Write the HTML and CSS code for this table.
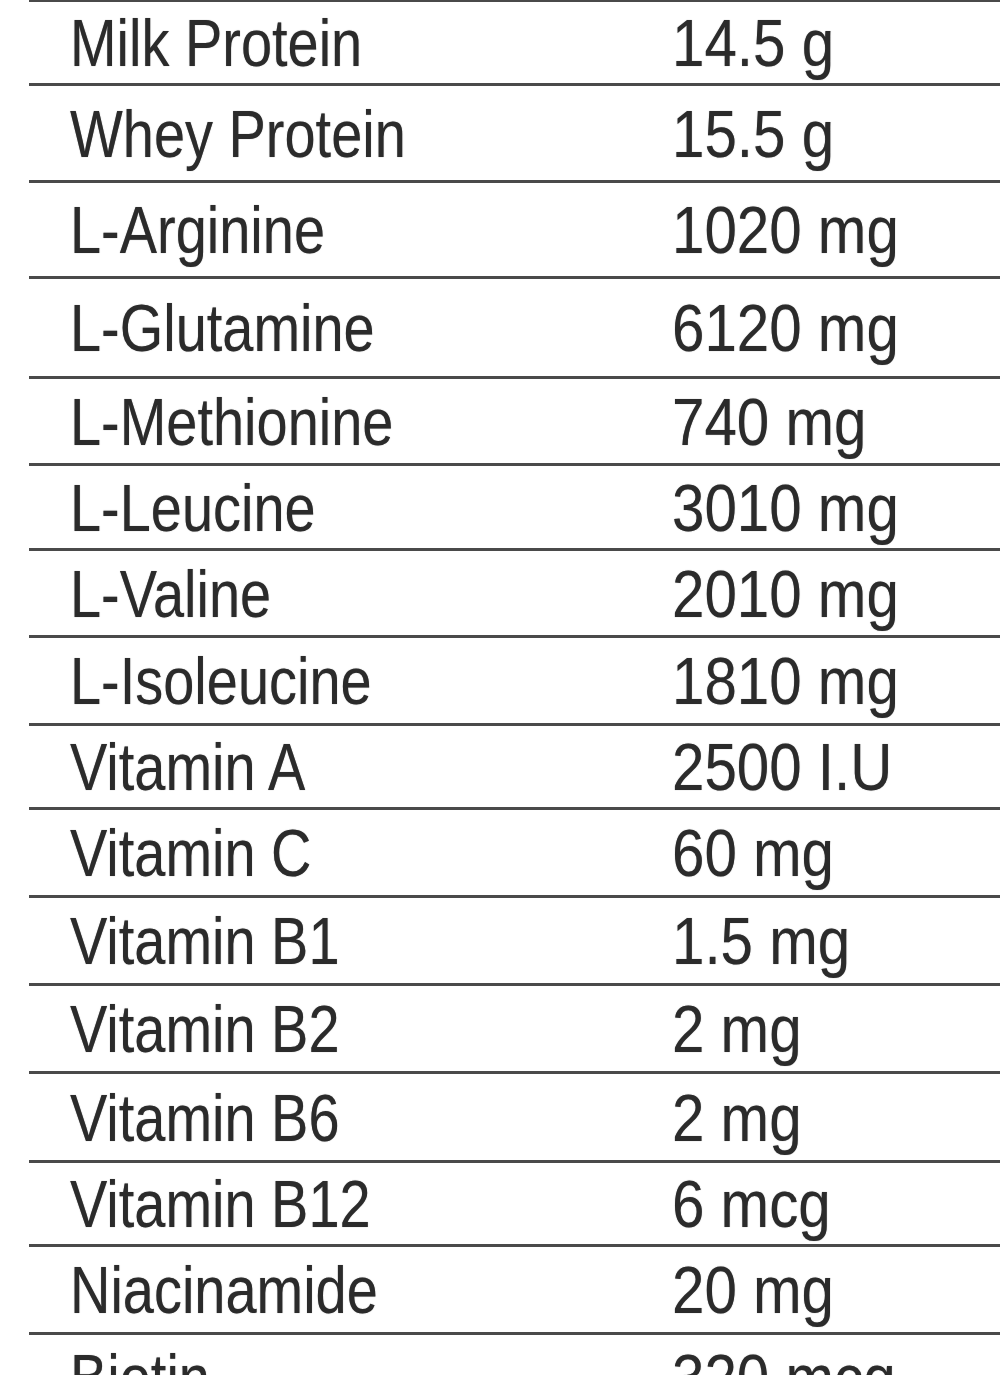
FILE: index.html
```html
<!DOCTYPE html>
<html lang="en">
<head>
<meta charset="utf-8">
<title>Nutrition Facts</title>
<link rel="stylesheet" href="styles.css">
</head>
<body>
<div class="facts">
  <div class="row"><span class="name">Milk Protein</span><span class="value">14.5 g</span></div>
  <div class="row"><span class="name">Whey Protein</span><span class="value">15.5 g</span></div>
  <div class="row"><span class="name">L-Arginine</span><span class="value">1020 mg</span></div>
  <div class="row"><span class="name">L-Glutamine</span><span class="value">6120 mg</span></div>
  <div class="row"><span class="name">L-Methionine</span><span class="value">740 mg</span></div>
  <div class="row"><span class="name">L-Leucine</span><span class="value">3010 mg</span></div>
  <div class="row"><span class="name">L-Valine</span><span class="value">2010 mg</span></div>
  <div class="row"><span class="name">L-Isoleucine</span><span class="value">1810 mg</span></div>
  <div class="row"><span class="name">Vitamin A</span><span class="value">2500 I.U</span></div>
  <div class="row"><span class="name">Vitamin C</span><span class="value">60 mg</span></div>
  <div class="row"><span class="name">Vitamin B1</span><span class="value">1.5 mg</span></div>
  <div class="row"><span class="name">Vitamin B2</span><span class="value">2 mg</span></div>
  <div class="row"><span class="name">Vitamin B6</span><span class="value">2 mg</span></div>
  <div class="row"><span class="name">Vitamin B12</span><span class="value">6 mcg</span></div>
  <div class="row"><span class="name">Niacinamide</span><span class="value">20 mg</span></div>
  <div class="row"><span class="name">Biotin</span><span class="value">320 mcg</span></div>
</div>
</body>
</html>
```
FILE: styles.css
```css
html, body {
  margin: 0;
  padding: 0;
  background: #ffffff;
  overflow: hidden;
}

.facts {
  margin-top: -1px;
  margin-left: 29px;
  display: grid;
  grid-template-rows: 84px 97px 96px 100px 87px 85px 87px 88px 84px 88px 88px 88px 89px 84px 88px 88px;
  font-family: "Liberation Sans", Arial, sans-serif;
  font-size: 67px;
  line-height: 1;
  color: #2b2b2b;
}

.row {
  box-sizing: border-box;
  border-top: 3px solid #4a4a4a;
  display: grid;
  grid-template-columns: 602px 1fr;
  align-items: center;
  padding-left: 41px;
  overflow: hidden;
}

.name,
.value {
  display: inline-block;
  justify-self: start;
  white-space: nowrap;
  transform-origin: left center;
  text-shadow: 0 0 1px rgba(40, 40, 40, 0.55);
}

.name {
  transform: scaleX(0.835);
}

.value {
  transform: scaleX(0.87);
}
```
